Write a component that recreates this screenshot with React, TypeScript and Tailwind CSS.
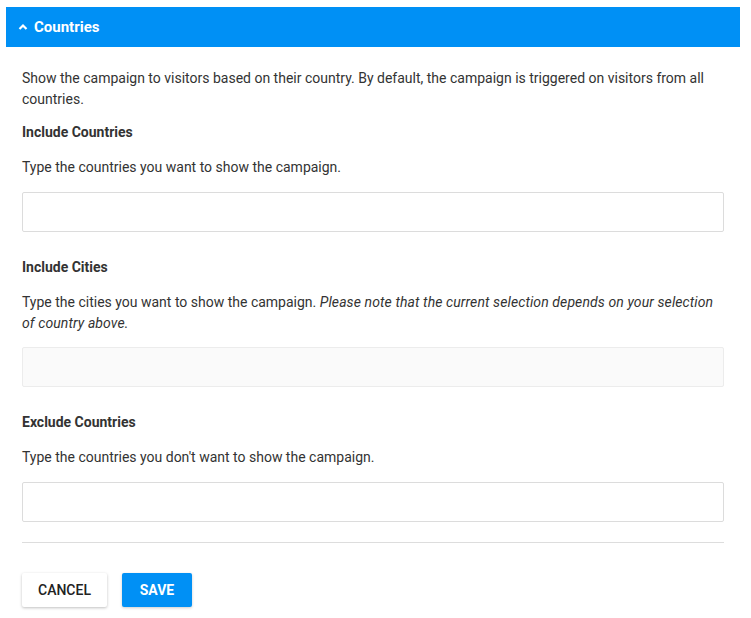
import React from 'react';

const labelCls = "text-[14px] leading-[21px] font-bold text-[#333]";
const textCls = "text-[14px] leading-[21px] text-[#333]";

const Field: React.FC<{ disabled?: boolean }> = ({ disabled }) => (
  <input
    type="text"
    disabled={disabled}
    className={
      disabled
        ? "block w-full h-[40px] border border-[#ececec] bg-[#fafafa] rounded-[2px] outline-none"
        : "block w-full h-[40px] border border-[#dcdcdc] bg-white rounded-[2px] outline-none"
    }
  />
);

export default function App() {
  return (
    <div className="min-h-screen bg-white pt-[7px] pl-[6px] pr-[11px]" style={{ fontFamily: 'Roboto, "Liberation Sans", sans-serif' }}>
      <div className="h-[40px] bg-[#0090f5] flex items-center pl-[12px] gap-[6px] text-white">
        <svg width="10" height="10" viewBox="0 0 10 10" className="mt-[-1px]">
          <path d="M1.5 7 L5 3.5 L8.5 7" fill="none" stroke="white" strokeWidth="2.2" />
        </svg>
        <span className="text-[15px] font-bold">Countries</span>
      </div>

      <div className="px-[16px] pt-[21px]">
        <p className={textCls}>
          Show the campaign to visitors based on their country. By default, the campaign is triggered on visitors from all countries.
        </p>

        <div className={labelCls + " mt-[12px]"}>Include Countries</div>
        <p className={textCls + " mt-[14px]"}>Type the countries you want to show the campaign.</p>
        <div className="mt-[14px]"><Field /></div>

        <div className={labelCls + " mt-[25px]"}>Include Cities</div>
        <p className={textCls + " mt-[14px]"}>
          Type the cities you want to show the campaign.{' '}
          <em className="tracking-[0.1px]">Please note that the current selection depends on your selection of country above.</em>
        </p>
        <div className="mt-[13px]"><Field disabled /></div>

        <div className={labelCls + " mt-[25px]"}>Exclude Countries</div>
        <p className={textCls + " mt-[14px]"}>Type the countries you don't want to show the campaign.</p>
        <div className="mt-[14px]"><Field /></div>

        <div className="h-px bg-[#dddddd] mt-[20px]" />

        <div className="flex gap-[15px] mt-[30px]">
          <button className="h-[34px] w-[85px] bg-white rounded-[2px] text-[14px] font-medium text-[#222] shadow-[0_1px_3px_rgba(0,0,0,0.25)]">
            CANCEL
          </button>
          <button className="h-[34px] w-[70px] bg-[#0090f5] rounded-[2px] text-[14px] font-bold text-white shadow-[0_1px_3px_rgba(0,0,0,0.2)]">
            SAVE
          </button>
        </div>
      </div>
    </div>
  );
}
